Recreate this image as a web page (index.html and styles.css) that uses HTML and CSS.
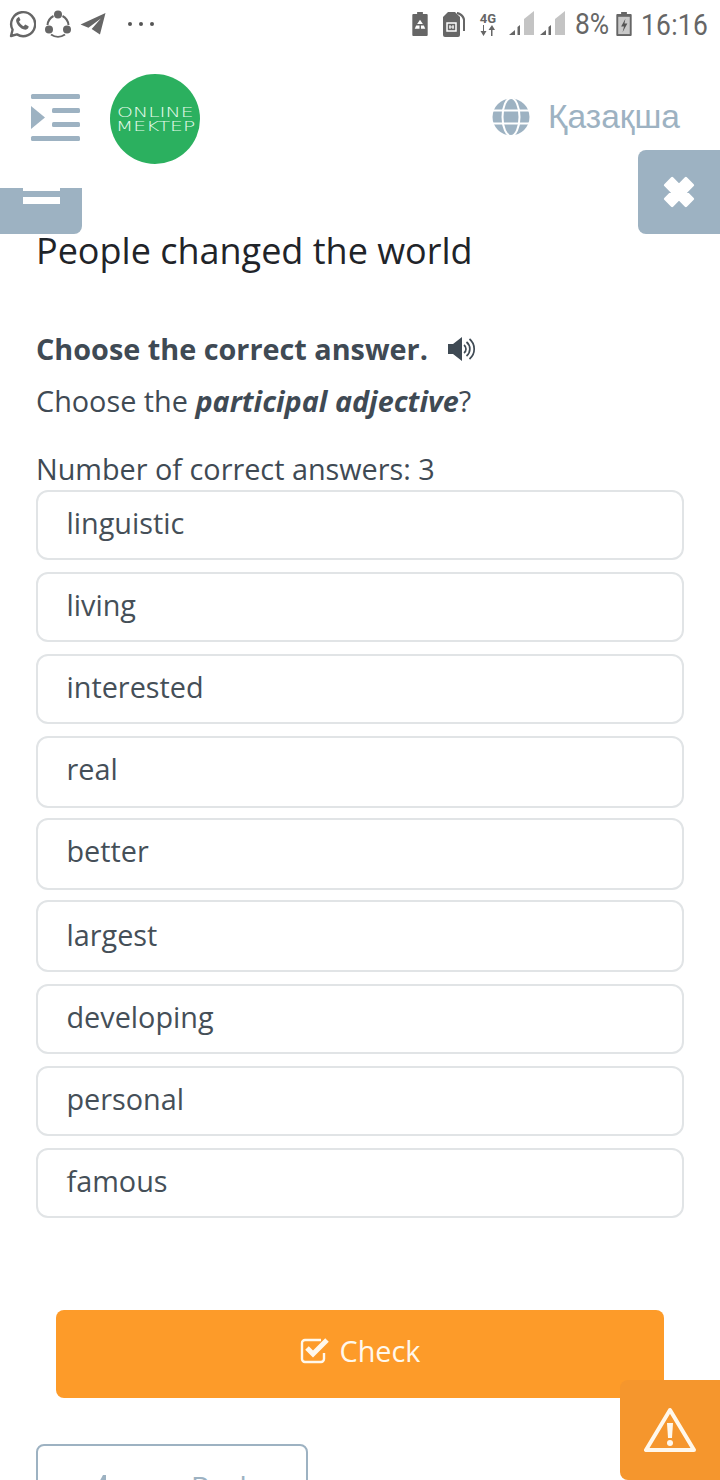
FILE: index.html
```html
<!DOCTYPE html>
<html>
<head>
    <title>People changed the world</title>
    <link rel="stylesheet" href="styles.css">
</head>
<body>
    <div class="status-bar">
        <div class="status-left">
            <!-- whatsapp -->
            <svg width="28" height="28" viewBox="0 0 28 28"><path d="M3 26l1.600-6.200A12 12 0 1 1 9 24.400z" fill="none" stroke="#666" stroke-width="2.400" stroke-linejoin="round"/><path d="M10 7.500c-1.500.7-2.200 2.300-1.700 4.200 1 3.500 4.300 6.800 7.800 7.800 2 .5 3.700-.2 4.300-1.700l.2-1.500-3.400-1.800-1.500 1.700c-1.800-.6-4-2.800-4.700-4.600l1.500-1.500-1.500-3.300z" fill="#666"/></svg>
            <!-- shareit -->
            <svg width="28" height="28" viewBox="0 0 28 28"><path d="M9.500 6A11.500 11.500 0 0 0 3.500 15M18.500 6A11.500 11.500 0 0 1 24.500 15M7 24.500a12 12 0 0 0 14 0" fill="none" stroke="#666" stroke-width="2"/><circle cx="14" cy="4.500" r="4" fill="#666"/><circle cx="5" cy="19.500" r="4" fill="#666"/><circle cx="23" cy="19.500" r="4" fill="#666"/></svg>
            <!-- telegram -->
            <svg width="27" height="24" viewBox="0 0 28 26"><path d="M27 1L0 13.500l8.500 3.500L22 7 12 18.500l9 6z" fill="#666"/></svg>
            <span class="dots"><i></i><i></i><i></i></span>
        </div>
        <div class="status-right">
            <svg width="16" height="24" viewBox="0 0 16 25"><path d="M5 0h6v2h4a1 1 0 0 1 1 1v21a1 1 0 0 1-1 1H1a1 1 0 0 1-1-1V3a1 1 0 0 1 1-1h4z" fill="#666"/><path d="M8 8l3 4.500H5zM4 14h3.500v3.500H2.500zM12 14l1.500 3.500H9V14z" fill="#fff"/></svg>
            <svg class="sim" width="22" height="25" viewBox="0 0 22 25"><path d="M5 0h7l5 5v18a2 2 0 0 1-2 2H2a2 2 0 0 1-2-2V5z" fill="#666"/><path d="M14 0c4 .5 7 3 8 7v12h-2V8c-.5-3-3-5-6-6z" fill="#666"/><path d="M4 11h9v8H4z" fill="none" stroke="#fff" stroke-width="1.500"/><path d="M7 13v4M10 13v4M6 15h5" stroke="#fff"/></svg>
            <span class="net"><b>4G</b><svg width="16" height="11" viewBox="0 0 16 11"><path d="M4 0v6h2.500L3.500 11 .5 6H3V0zM12 0l3 5h-2.500v6H11V5H8.500z" fill="#666"/></svg></span>
            <svg class="signal" width="25" height="24" viewBox="0 0 25 24"><path d="M0 24l6-5v5z" fill="#666"/><path d="M8.500 24v-8l2.500-2v10z" fill="#666"/><path d="M15 24V8l10-8v24z" fill="#c4c4c4"/></svg>
            <svg class="signal second" width="25" height="24" viewBox="0 0 25 24"><path d="M0 24l6-5v5z" fill="#666"/><path d="M8.500 24v-8l2.500-2v10z" fill="#666"/><path d="M15 24V8l10-8v24z" fill="#c4c4c4"/></svg>
            <span class="percent">8%</span>
            <svg class="battery" width="16" height="24" viewBox="0 0 16 25"><path d="M5 0h6v2h4a1 1 0 0 1 1 1v21a1 1 0 0 1-1 1H1a1 1 0 0 1-1-1V3a1 1 0 0 1 1-1h4z" fill="#666"/><path d="M2 5h12v18H2z" fill="#c9c9c9"/><path d="M9.500 7L5 15h3l-1.500 6L11.500 12H8.500z" fill="#555"/></svg>
            <span class="clock">16:16</span>
        </div>
    </div>

    <div class="header">
        <svg class="menu-icon" width="50" height="48" viewBox="0 0 50 48"><g fill="#9db2c2"><rect x="1" y="0" width="49" height="5" rx="1.500"/><rect x="22" y="14" width="28" height="5" rx="1.500"/><rect x="22" y="28" width="28" height="5" rx="1.500"/><rect x="1" y="42" width="49" height="5" rx="1.500"/><path d="M1 12l14 11.500L1 35z"/></g></svg>
        <div class="logo"><span>ONLINE</span><span>MEKTEP</span></div>
        <div class="lang">
            <svg width="38" height="38" viewBox="0 0 38 38"><circle cx="19" cy="19" r="18.500" fill="#9db2c2"/><g fill="none" stroke="#fff" stroke-width="2"><ellipse cx="19" cy="19" rx="8.500" ry="19"/><path d="M1 12.500h36M1 25.500h36"/></g></svg>
            <span>Қазақша</span>
        </div>
    </div>

    <div class="tab-left"><i></i></div>
    <div class="tab-close">
        <svg width="44" height="44" viewBox="0 0 32 32"><path d="M6 11l5-5 5 5 5-5 5 5-5 5 5 5-5 5-5-5-5 5-5-5 5-5z" fill="#fff" stroke="#fff" stroke-width="2" stroke-linejoin="round"/></svg>
    </div>

    <div class="content">
        <h1 class="title">People changed the world</h1>
        <div class="task">
            <strong>Choose the correct answer.</strong>
            <svg width="28" height="24" viewBox="0 0 28 24"><path d="M0 7h5l9-7v24l-9-7H0z" fill="#3f4a54"/><path d="M16 8a5 5 0 0 1 0 8M18.500 5a9 9 0 0 1 0 14M21.500 2a13 13 0 0 1 0 20" fill="none" stroke="#3f4a54" stroke-width="1.700"/></svg>
        </div>
        <p class="question">Choose the <b><i>participal adjective</i></b>?</p>
        <p class="count">Number of correct answers: 3</p>

        <div class="answers">
            <div class="answer">linguistic</div>
            <div class="answer">living</div>
            <div class="answer">interested</div>
            <div class="answer tall tight">real</div>
            <div class="answer tall tight">better</div>
            <div class="answer tall low">largest</div>
            <div class="answer">developing</div>
            <div class="answer">personal</div>
            <div class="answer">famous</div>
        </div>

        <button class="check">
            <svg width="30" height="28" viewBox="0 0 30 28"><path d="M21 4H5a3 3 0 0 0-3 3v16a3 3 0 0 0 3 3h16a3 3 0 0 0 3-3v-6" fill="none" stroke="#fff8ec" stroke-width="2.400"/><path d="M7 12l6 6L27 4" fill="none" stroke="#fff8ec" stroke-width="5"/></svg>
            <span>Check</span>
        </button>
        <button class="back">
            <svg width="24" height="22" viewBox="0 0 24 22"><path d="M12 0h3v22H0z" fill="#9db2c2"/></svg>
            <span>Back</span>
        </button>
    </div>

    <div class="tab-warning">
        <svg width="52" height="46" viewBox="0 0 52 46"><path d="M26 3L2 43h48z" fill="none" stroke="#fff8ec" stroke-width="4" stroke-linejoin="round"/><path d="M23 16h6l-1 15h-4z" fill="#fff8ec"/><circle cx="26" cy="36" r="3" fill="#fff8ec"/></svg>
    </div>
</body>
</html>
```

FILE: styles.css
```css
html, body { margin: 0; padding: 0; height: 1480px; overflow: hidden; background: #fff; }
body { position: relative; font-family: "Open Sans", sans-serif; color: #3f4a54; }

.status-bar { height: 48px; display: flex; justify-content: space-between; align-items: center; padding: 0 14px 0 8px; }
.status-left { display: flex; align-items: center; gap: 8px; }
.dots { display: flex; gap: 7px; margin-left: 13px; }
.dots i { width: 4px; height: 4px; border-radius: 50%; background: #555; }
.status-right { display: flex; align-items: center; }
.status-right .sim { margin-left: 15px; }
.net { display: flex; flex-direction: column; align-items: center; margin-left: 14px; width: 18px; }
.net b { font: 700 13px/12px "Roboto", sans-serif; color: #666; }
.signal { margin: -2px 0 0 12px; }
.signal.second { margin-left: 6px; }
.percent, .clock { display: block; font-family: "Roboto", sans-serif; color: #666; white-space: nowrap; transform-origin: left center; }
.percent { width: 32px; margin-left: 10px; font-size: 29px; transform: scaleX(0.91); }
.battery { margin-left: 9px; }
.clock { width: 65px; margin-left: 9px; font-size: 30px; letter-spacing: 0.3px; transform: scaleX(0.88); }

.header { height: 140px; display: flex; align-items: center; padding: 0 40px 0 30px; }
.menu-icon { margin-top: 0; }
.logo { width: 90px; height: 90px; margin: 2px 0 0 30px; border-radius: 50%; background: #2bb05f; color: #e6fbec; display: flex; flex-direction: column; align-items: center; justify-content: center; font: 200 14.500px/14.500px "DejaVu Sans", sans-serif; }
.logo span { transform: scaleX(1.4); }
.lang { margin-left: auto; margin-top: -2px; display: flex; align-items: center; gap: 18px; color: #9db2c2; font: 33.500px "Liberation Sans", sans-serif; }

.tab-left { position: absolute; left: 0; top: 188px; width: 82px; height: 46px; background: #9db2c2; border-bottom-right-radius: 8px; }
.tab-left i { position: absolute; left: 23px; top: 0; width: 37px; height: 16px; background: linear-gradient(#fff 0 3px, #9db2c2 3px 9px, #fff 9px 16px); }
.tab-close { position: absolute; right: 0; top: 150px; width: 82px; height: 84px; display: flex; align-items: center; justify-content: center; background: #9db2c2; border-radius: 8px 0 0 8px; }
.tab-warning { position: absolute; right: 0; top: 1380px; width: 100px; height: 100px; display: flex; align-items: center; justify-content: center; background: #f5962d; border-radius: 8px 0 0 8px; }

.content { padding: 0 36px; }
.title { margin: 40px 0 0; font-size: 36px; line-height: 46px; font-weight: 400; color: #1f2429; }
.task { margin-top: 55px; display: flex; align-items: center; gap: 20px; font-size: 28.800px; line-height: 40px; }
.question { margin: 12px 0 0; font-size: 28.800px; line-height: 40px; }
.count { margin: 28px 0 0; font-size: 28.800px; line-height: 40px; }

.answers { margin-top: 1px; }
.answer { height: 66px; margin-bottom: 12px; padding-left: 28.500px; border: 2px solid #e1e4e6; border-radius: 12px; font-size: 28.800px; line-height: 62px; color: #454f58; }
.answer.tall { height: 68px; }
.answer.tight { margin-bottom: 10px; }
.answer.low { line-height: 66px; }

.check { display: flex; align-items: center; justify-content: center; gap: 10px; width: 608px; height: 88px; margin: 92px 0 0 20px; padding: 0 0 8px; border: none; border-radius: 8px; background: #fd9b29; color: #fff8ec; font: 28.800px "Open Sans", sans-serif; }
.back { display: flex; align-items: flex-start; gap: 76px; width: 272px; height: 88px; margin-top: 46px; padding: 21px 0 0 53px; border: 2px solid #9db2c2; border-radius: 8px; background: #fff; color: #9db2c2; font: 28.800px/40px "Open Sans", sans-serif; }
.back svg { margin-top: 8px; }
```
